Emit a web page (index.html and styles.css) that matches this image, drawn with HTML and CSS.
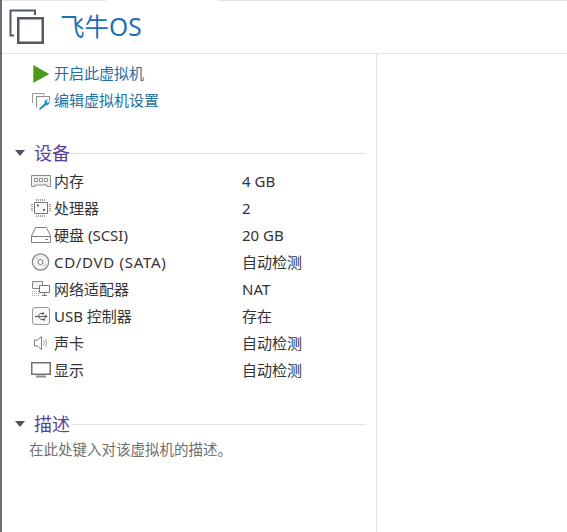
FILE: index.html
```html
<!DOCTYPE html>
<html>
	<head>
		<meta charset="utf-8"/>
		<title>飞牛OS</title>
		<link rel="stylesheet" href="styles.css">
	</head>
	<body>
		<div class="vm-page">
			<div class="top-strip">
				<span class="strip-left"></span>
				<span class="strip-gap"></span>
				<span class="strip-right"></span>
			</div>
			<div class="vm-header">
				<svg class="vm-logo" width="36" height="36" viewBox="0 0 36 36">
					<path d="M26 6V1.500H1.500V26.500H5" fill="none" stroke="#505a66" stroke-width="2"/>
					<path d="M9.250 9.250H33.750V33.750H9.250Z" fill="none" stroke="#505a66" stroke-width="2.500"/>
				</svg>
				<h1 class="vm-title">飞牛OS</h1>
			</div>
			<div class="vm-body">
				<div class="vm-side">
					<div class="action-list">
						<div class="action-row">
							<svg class="row-icon" width="20" height="18" viewBox="0 0 20 18"><path d="M1.300 0L17.300 9L1.300 18Z" fill="#4e9a1c"/></svg>
							<span>开启此虚拟机</span>
						</div>
						<div class="action-row">
							<svg class="row-icon" width="20" height="18" viewBox="0 0 20 18">
								<path d="M0.500 11V1.500H12V3.500" fill="none" stroke="#9a9a9a"/>
								<path d="M4.500 15.500V4.500H17.500V9" fill="#fff" stroke="#8a8a8a"/>
								<path d="M8 18L7 16.500L12.500 11.500L12.500 9L15 7.500L16 7.800L14.500 9.500L15.500 11L17.500 9.500L17.800 10.500L16 13L14 13.200Z" fill="#1f8fc4"/>
							</svg>
							<span>编辑虚拟机设置</span>
						</div>
					</div>

					<div class="section-head section-devices">
						<span class="caret"></span>
						<span class="section-name">设备</span>
						<span class="section-line"></span>
					</div>
					<div class="device-list">
						<div class="device-row">
							<svg class="row-icon" width="20" height="18" viewBox="0 0 20 18">
								<path d="M0.500 3.500H19.500V14.500H16V13H4V14.500H0.500Z" fill="#f0f0f0" stroke="#8a8a8a"/>
								<path d="M3.500 6.500H6.500V9.500H3.500ZM8.500 6.500H11.500V9.500H8.500ZM13.500 6.500H16.500V9.500H13.500Z" fill="#fff" stroke="#8f8f8f"/>
							</svg>
							<span class="device-name">内存</span>
							<span class="device-val">4 GB</span>
						</div>
						<div class="device-row">
							<svg class="row-icon" width="20" height="18" viewBox="0 0 20 18">
								<path d="M3.500 3.500H16.500V14.500H3.500Z" fill="#fbfbfb" stroke="#777"/>
								<path d="M5.500 0V2M7.500 0V2M9.500 0V2M11.500 0V2M13.500 0V2M5.500 16V18M7.500 16V18M9.500 16V18M11.500 16V18M13.500 16V18M0 5.500H2M0 7.500H2M0 9.500H2M0 11.500H2M18 5.500H20M18 7.500H20M18 9.500H20M18 11.500H20" stroke="#999"/>
								<path d="M6 5.500H8V7.500H6ZM12 10H14V12H12Z" fill="#666"/>
							</svg>
							<span class="device-name">处理器</span>
							<span class="device-val">2</span>
						</div>
						<div class="device-row">
							<svg class="row-icon" width="20" height="18" viewBox="0 0 20 18">
								<path d="M4.500 1.500H15.500L19.500 10V16.500H0.500V10Z" fill="#fff" stroke="#808080"/>
								<path d="M0.500 10.500H19.500" stroke="#808080"/>
								<path d="M14 13.500H17" stroke="#808080"/>
							</svg>
							<span class="device-name">硬盘 (SCSI)</span>
							<span class="device-val">20 GB</span>
						</div>
						<div class="device-row">
							<svg class="row-icon" width="20" height="18" viewBox="0 0 20 18">
								<circle cx="9.500" cy="9" r="8.200" fill="#f2f2f2" stroke="#888" stroke-width="1.200"/>
								<circle cx="9.500" cy="9" r="2.500" fill="#fff" stroke="#777"/>
								<path d="M5 5.500L6.500 4.500M13 13L14.500 11.500" stroke="#999"/>
							</svg>
							<span class="device-name device-name-wide">CD/DVD (SATA)</span>
							<span class="device-val">自动检测</span>
						</div>
						<div class="device-row">
							<svg class="row-icon" width="20" height="18" viewBox="0 0 20 18">
								<path d="M1.500 1.500H11.500V8.500H1.500Z" fill="#f4f4f4" stroke="#888"/>
								<path d="M8.500 5.500H18.500V12.500H8.500Z" fill="#fff" stroke="#777"/>
								<path d="M13.500 12.500V15M11 15.500H16" stroke="#777"/>
								<path d="M1 11.500H8M1 13.500H8M1 15.500H8" fill="none" stroke="#aaa" stroke-dasharray="1 1"/>
							</svg>
							<span class="device-name">网络适配器</span>
							<span class="device-val">NAT</span>
						</div>
						<div class="device-row">
							<svg class="row-icon" width="20" height="18" viewBox="0 0 20 18">
								<rect x="1.500" y="0.500" width="17" height="17" rx="2.500" fill="#f8f8f8" stroke="#999"/>
								<path d="M4 9.500H14M6.500 9.500L9 6.500H11M7.500 9.500L10 12.500H12" fill="none" stroke="#555"/>
								<path d="M14 7.500V11.500L16.500 9.500ZM11 5.500H13V7.500H11ZM12 11.500H14V13.500H12Z" fill="#555"/>
							</svg>
							<span class="device-name">USB 控制器</span>
							<span class="device-val">存在</span>
						</div>
						<div class="device-row">
							<svg class="row-icon" width="20" height="18" viewBox="0 0 20 18">
								<path d="M3.500 6H6.500L10.500 2.500V15.500L6.500 12H3.500Z" fill="#fff" stroke="#808080"/>
								<path d="M12.500 6.500Q14 9 12.500 11.500M14.500 5Q16.500 9 14.500 13" fill="none" stroke="#a5a5a5"/>
							</svg>
							<span class="device-name">声卡</span>
							<span class="device-val">自动检测</span>
						</div>
						<div class="device-row">
							<svg class="row-icon" width="20" height="18" viewBox="0 0 20 18">
								<path d="M0.750 1.750H19.250V13.250H0.750Z" fill="#fff" stroke="#707070" stroke-width="1.500"/>
								<path d="M5 15.500H15" stroke="#8a8a8a" stroke-width="2"/>
							</svg>
							<span class="device-name">显示</span>
							<span class="device-val">自动检测</span>
						</div>
					</div>

					<div class="section-head section-desc">
						<span class="caret"></span>
						<span class="section-name">描述</span>
						<span class="section-line"></span>
					</div>
					<p class="desc-txt">在此处键入对该虚拟机的描述。</p>
				</div>
				<div class="vm-right"></div>
			</div>
		</div>
	</body>
</html>
```

FILE: styles.css
```css
html,body{height: 100%;}
body{margin: 0px;background: #fff;font-size: 15px;font-family: "Noto Sans", "Noto Sans CJK SC", sans-serif;color: #333;overflow: hidden;}
p{margin: 0px;}
.vm-page{display: flex;flex-direction: column;height: 100%;border-left: 2px solid #6e6e6e;box-sizing: border-box;}
.top-strip{display: flex;height: 1px;flex-shrink: 0;}
.strip-left{width: 104px;background: #e6e6e6;}
.strip-gap{width: 112px;}
.strip-right{flex: 1;background: #e2e2e2;}
.vm-header{display: flex;align-items: center;height: 52px;border-bottom: 1px solid #e2e2e2;padding-left: 7px;flex-shrink: 0;}
.vm-title{margin: 0px 0px 0px 15px;font-size: 24.500px;font-weight: 400;color: #1f6fb8;line-height: 30px;}
.vm-body{display: flex;flex: 1;}
.vm-side{width: 374px;border-right: 1px solid #e2e2e2;padding-top: 6px;}
.vm-right{flex: 1;}
.action-row{display: flex;align-items: center;height: 27px;padding-left: 30px;color: #1f6f9f;line-height: 27px;}
.action-row .row-icon{margin-right: 2px;}
.row-icon{flex-shrink: 0;}
.section-head{display: flex;align-items: center;height: 24px;}
.section-devices{margin-top: 27px;}
.section-desc{margin-top: 29px;}
.caret{width: 0;height: 0;border-left: 5.500px solid transparent;border-right: 5.500px solid transparent;border-top: 6px solid #4b5560;margin-left: 13px;margin-right: 8px;}
.section-name{font-size: 18px;color: #5a3f9c;line-height: 24px;margin-left: 1px;}
.section-line{flex: 1;height: 1px;background: #e2e2e2;margin: 0px 10px 0px 1px;}
.device-list{margin-top: 2px;}
.device-row{display: flex;align-items: center;height: 27px;padding-left: 29px;}
.device-row .row-icon{margin-right: 3px;}
.device-name{width: 188px;}
.device-name-wide{letter-spacing: 0.700px;}
.device-val{flex: 1;}
.desc-txt{padding-left: 27px;padding-top: 3px;font-size: 14.500px;color: #6f6f6f;line-height: 20px;}
```
